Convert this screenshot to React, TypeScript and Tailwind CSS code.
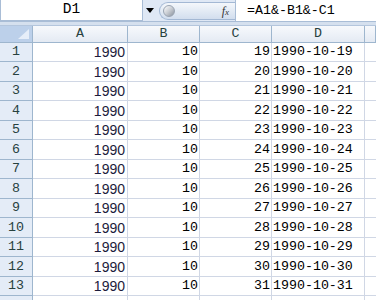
import React from "react";

const mono = { fontFamily: '"Liberation Mono", "DejaVu Sans Mono", monospace' };
const sans = { fontFamily: '"Liberation Sans", Arial, sans-serif' };

const rows = Array.from({ length: 14 }, (_, i) => i + 1);

export default function App() {
  return (
    <div className="w-[376px] h-[300px] overflow-hidden bg-white select-none">
      {/* formula bar */}
      <div className="flex h-[22px] bg-[#dfe8f5] border-b border-[#a9bdd6]">
        <div className="w-[143px] h-full bg-white border border-[#a9bdd6] border-t-0 flex items-center justify-center text-[14.5px] text-black" style={mono}>
          D1
        </div>
        <div className="w-[13px] flex items-center justify-center">
          <svg width="8" height="5" viewBox="0 0 8 5"><path d="M0 0H8L4 5Z" fill="#000" /></svg>
        </div>
        <div className="flex-1 flex items-center pl-[3px]">
          <div className="h-[18px] w-[76px] rounded-l-full bg-gradient-to-b from-[#f4f7fb] to-[#d2deee] border border-[#a3b8d4] border-r-0 flex items-center">
            <div className="ml-[3px] w-[12px] h-[12px] rounded-full bg-gradient-to-br from-[#ffffff] via-[#c9cdd3] to-[#8b939e] border border-[#9aa4b2]" />
            <div className="ml-auto mr-[6px] text-[12px] italic text-[#333]" style={{ fontFamily: '"Liberation Serif", serif' }}>
              <i>f</i><span className="text-[9px]">x</span>
            </div>
          </div>
          <div className="flex-1 h-full bg-white border-l border-[#a9bdd6] flex items-center pl-[11px] text-[13.3px] text-black" style={mono}>
            =A1&amp;-B1&amp;-C1
          </div>
        </div>
      </div>
      <div className="h-[4px] bg-[#d5e0ee] border-b border-[#b4c6dd]" />
      {/* header row */}
      <div className="grid grid-cols-[33px_95px_72px_72px_93px_1fr] h-[17px]">
        <div className="relative bg-[#bcd0ea] border-r border-b border-[#9eb6ce]">
          <svg className="absolute right-[3px] bottom-[3px]" width="11" height="10" viewBox="0 0 11 10"><path d="M11 0V10H0Z" fill="#e6eef9" /></svg>
        </div>
        {["A", "B", "C", "D", ""].map((c, i) => (
          <div key={i} className="bg-gradient-to-b from-[#f7f9fc] to-[#e4eaf3] border-r border-b border-[#9eb6ce] flex items-center justify-center text-[13.3px] text-[#27413e] leading-none" style={mono}>
            {c}
          </div>
        ))}
      </div>
      {rows.map((r) => {
        const h = r % 2 === 1 ? "h-[19px]" : "h-[20px]";
        const has = r <= 13;
        return (
          <div key={r} className={`grid grid-cols-[33px_95px_72px_72px_93px_1fr] ${h}`}>
            <div className="bg-[#e4ecf7] border-r border-b border-[#9eb6ce] flex items-center justify-center text-[13.3px] text-[#27413e] leading-none" style={mono}>
              {r}
            </div>
            <div className="border-r border-b border-[#d0d7e5] flex items-center justify-end pr-[2px] text-[14px] text-[#1c1c3c] leading-none" style={sans}>
              {has ? "1990" : ""}
            </div>
            <div className="border-r border-b border-[#d0d7e5] flex items-center justify-end pr-[1px] text-[13.3px] text-black leading-none" style={mono}>
              {has ? "10" : ""}
            </div>
            <div className="border-r border-b border-[#d0d7e5] flex items-center justify-end pr-[1px] text-[13.3px] text-black leading-none" style={mono}>
              {has ? String(18 + r) : ""}
            </div>
            <div className="border-r border-b border-[#d0d7e5] flex items-center pl-[1px] text-[13.3px] text-black leading-none" style={mono}>
              {has ? `1990-10-${18 + r}` : ""}
            </div>
            <div className="border-b border-[#d0d7e5]" />
          </div>
        );
      })}
    </div>
  );
}
